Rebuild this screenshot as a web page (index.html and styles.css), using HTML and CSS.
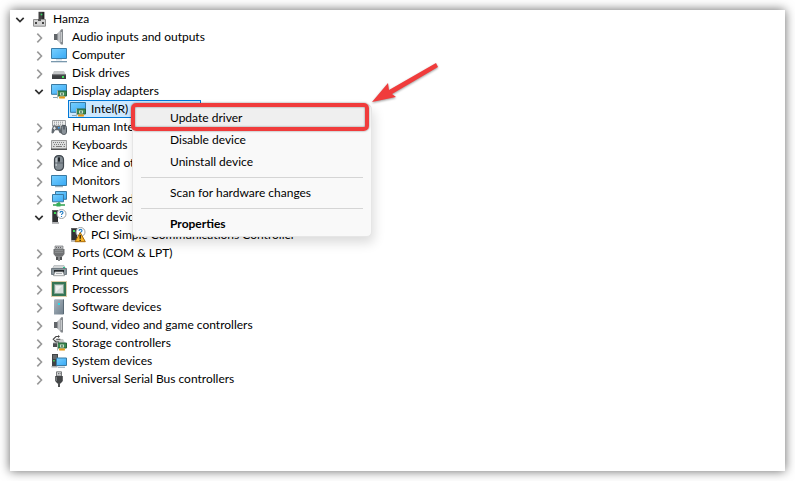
FILE: index.html
```html
<!DOCTYPE html>
<html lang="en">
  <head>
    <meta charset="UTF-8" />
    <meta name="viewport" content="width=device-width, initial-scale=1.0" />
    <title>Device Manager</title>
    <link rel="stylesheet" href="styles.css">
  </head>
  <body>
    <!-- icon set -->
    <svg class="sprite" aria-hidden="true">
      <defs>
        <linearGradient id="blue" x1="0" y1="0" x2="1" y2="1">
          <stop offset="0" stop-color="#78d0ff" />
          <stop offset="1" stop-color="#38a9f5" />
        </linearGradient>
        <linearGradient id="metal" x1="0" y1="0" x2="1" y2="0">
          <stop offset="0" stop-color="#777b80" />
          <stop offset="0.5" stop-color="#d4d6d8" />
          <stop offset="1" stop-color="#85898d" />
        </linearGradient>
        <linearGradient id="case" x1="0" y1="0" x2="1" y2="1">
          <stop offset="0" stop-color="#a9b5bf" />
          <stop offset="1" stop-color="#71808c" />
        </linearGradient>
        <symbol id="open" viewBox="0 0 12 12">
          <path d="M2.3 4.8 6 8.5 9.7 4.8" fill="none" stroke="#303030" stroke-width="1.7" />
        </symbol>
        <symbol id="closed" viewBox="0 0 12 12">
          <path d="M4.3 2.6 8.5 7 4.3 11.4" fill="none" stroke="#999" stroke-width="1.6" />
        </symbol>
        <symbol id="root" viewBox="0 0 16 16">
          <path d="M6.5 .8h5.8v8H6.5z" fill="#434343" />
          <path d="M10.4 1h1.8v7.5h-1.8z" fill="#272727" />
          <path d="M8.7 2.7h1.6v1.6H8.7z" fill="#35dc64" />
          <path d="M1.5 8.5h12v6.7h-12z" fill="#d2d2d2" stroke="#909090" />
          <path d="M6 8h3v2H6z" fill="#555" />
          <path d="M3 11h2v2H3zM10 11h2v2h-2z" fill="#444" />
        </symbol>
        <symbol id="speaker" viewBox="0 0 16 16">
          <path d="M3 5h3v6H3z" fill="#62666a" />
          <path d="M6 5 10 .5v15L6 11z" fill="url(#metal)" />
          <path d="M10 .3h2v15.2h-2z" fill="#84888c" />
          <path d="M10.3 3v10" stroke="#d9dbdd" />
        </symbol>
        <symbol id="computer" viewBox="0 0 16 16">
          <path d="M.5 1.5h15v10H.5z" fill="url(#blue)" stroke="#3b7eaa" />
          <path d="M5 12h6v1.5H5z" fill="#d4e0e8" />
          <path d="M0 14h16v1.3H0z" fill="#7998ad" />
        </symbol>
        <symbol id="disk" viewBox="0 0 16 16">
          <path d="M3 6h10l2 4H1z" fill="#c5c7c8" />
          <path d="M1 9.5h14V14H1z" fill="#3c3e40" />
          <path d="M1 9.3h14v.9H1z" fill="#77797b" />
          <path d="M11 11h2v2h-2z" fill="#40df5b" />
        </symbol>
        <symbol id="card" viewBox="0 0 10 8">
          <path d="M.5.5h9v5h-9z" fill="#3b8b52" stroke="#28603a" />
          <path d="M0 0h1v8H0z" fill="#aeb8b0" />
          <path d="M3 2h4v3H3z" fill="#c7ddc5" />
          <path d="M4.2 2.8h1.5v1.4H4.2z" fill="#275b40" />
          <path d="M2 6h6v2H2z" fill="#efa51e" />
          <path d="M4 6v2M6 6v2" stroke="#a76800" stroke-width=".4" />
        </symbol>
        <symbol id="display" viewBox="0 0 16 16">
          <path d="M.5 1.5h15v9.8H.5z" fill="url(#blue)" stroke="#397aa3" />
          <path d="M2 14h5v1H2z" fill="#8ba5b6" />
          <use href="#card" x="6" y="7" width="10" height="9" />
        </symbol>
        <symbol id="human" viewBox="0 0 16 16">
          <path d="M1.5 1.5h13v5.5h-13z" fill="#eceded" stroke="#9b9ea1" />
          <path d="M3 3.2h10M3 5.2h10" stroke="#8b8e91" stroke-dasharray="1 1" />
          <path d="M2 6.7q2-1.2 3 .3h2q1-1.2 2.2 0L10.5 14q-2 1-3.2-2.8H4Q2 16 .5 13.8.3 10 2 6.7z" fill="#626970" />
          <path d="M2 9.2h3M3.5 7.7v3" stroke="#e5e9ec" />
          <path d="M7 8h1.6v1.6H7z" fill="#379cf0" />
          <rect x="10.3" y="6.3" width="5.2" height="9.2" rx="2.4" fill="#8a9299" stroke="#4d555b" />
          <path d="M13 6.5v4" stroke="#28323a" />
        </symbol>
        <symbol id="keyboard" viewBox="0 0 16 16">
          <path d="M.5 3.5h15v9H.5z" fill="#dcdddd" stroke="#9b9b9b" />
          <path d="M2 5.5h12" stroke="#7d7d7d" stroke-dasharray="1 1" />
          <path d="M3 7.5h11" stroke="#7d7d7d" stroke-dasharray="1 1" />
          <path d="M2 9.5h1.5M5 9.5h6M12.5 9.5H14" stroke="#7d7d7d" />
          <path d="M0 11.5h16V13H0z" fill="#555" />
        </symbol>
        <symbol id="mouse" viewBox="0 0 16 16">
          <rect x="3.5" y=".6" width="9" height="14.8" rx="4" fill="#858e95" stroke="#3f474e" stroke-width="1.2" />
          <path d="M5.2 3v8" stroke="#c4cbd0" stroke-width="1.2" />
          <path d="M8 1v7M4 8h8" stroke="#5c656c" />
          <path d="M7 2.5h2v4H7z" fill="#20262b" />
        </symbol>
        <symbol id="monitor" viewBox="0 0 16 16">
          <path d="M.5 2.5h15v10H.5z" fill="url(#blue)" stroke="#397aa3" />
          <path d="M4 13.2h8v1H4z" fill="#839dad" />
        </symbol>
        <symbol id="network" viewBox="0 0 16 16">
          <path d="M4.5.5h11v7.8h-11z" fill="url(#blue)" stroke="#397aa3" />
          <path d="M1.5 3.5h11v7.3h-11z" fill="url(#blue)" stroke="#397aa3" />
          <path d="M7 11h2v2h5v2H2v-2h5z" fill="#61b779" />
          <path d="M5.5 12h4v3.5h-4z" fill="#36ad5b" />
        </symbol>
        <symbol id="other" viewBox="0 0 16 16">
          <path d="M1 1.2h6v12H1z" fill="#303234" />
          <path d="M1 1.2h1v12H1z" fill="#67696b" />
          <path d="M3 3h2v2H3z" fill="#3bd854" />
          <path d="M1 13.2h7v1.6H1z" fill="#a9abad" />
          <circle cx="10.5" cy="5" r="4.5" fill="#fff" stroke="#9b9ea1" />
          <path d="M9 3.9q.1-1.5 1.5-1.5t1.5 1.2q0 .7-.8 1.2-.7.4-.7 1.2M10.5 7v1" fill="none" stroke="#247dc5" stroke-width="1.1" />
        </symbol>
        <symbol id="warning" viewBox="0 0 16 16">
          <use href="#other" width="16" height="16" />
          <path d="M10.2 5.5 15.3 14.7H5.1z" fill="#f8b528" stroke="#a86808" stroke-linejoin="round" />
          <path d="M10.2 8v3.7M10.2 12.7v1.2" stroke="#2c2413" stroke-width="1.4" />
        </symbol>
        <symbol id="port" viewBox="0 0 16 16">
          <path d="M4 1h8v3H4z" fill="#bfc1c3" stroke="#77797b" stroke-width=".7" />
          <path d="M5 2.5h6" stroke="#666" stroke-dasharray="1 1" />
          <path d="M2.5 4h11v5l-2 2.5h-7l-2-2.5z" fill="#707274" />
          <path d="M4 5.3h8M4 7.3h8" stroke="#929496" />
          <path d="M5 11.5h2V15H5zM9 11.5h2V15H9z" fill="#505254" />
          <path d="M7 11h2v5H7z" fill="#858789" />
        </symbol>
        <symbol id="printer" viewBox="0 0 16 16">
          <path d="M3 2.5h10l1.5 3h-13z" fill="#d2d5d6" stroke="#a6abae" stroke-width=".6" />
          <path d="M.5 5.5h15v6H.5z" fill="#8a959b" stroke="#707b82" />
          <path d="M3 7h10v2.5H3z" fill="#25292c" />
          <path d="M4 8.7h8l1.5 4h-11z" fill="#f7f7f7" stroke="#646b6f" stroke-width=".6" />
          <path d="M12 4h2v1h-2z" fill="#20c98c" />
          <path d="M5 10.5h6" stroke="#acb1b4" />
        </symbol>
        <symbol id="chip" viewBox="0 0 16 16">
          <rect x=".5" y=".5" width="15" height="15" fill="none" stroke="#b99b50" stroke-dasharray="1 1" />
          <path d="M1 1h14v14H1z" fill="#357554" />
          <path d="M3.5 3.5h9v9h-9z" fill="#d6ddda" stroke="#85a494" />
          <path d="M5 5h6L5 11z" fill="#eff2f1" />
        </symbol>
        <symbol id="software" viewBox="0 0 16 16">
          <path d="M4 0h9v15H3V1z" fill="#bac4cb" />
          <path d="M3 1h9v14.5H3z" fill="url(#case)" />
          <path d="M12 1 13 0v15l-1 .5z" fill="#596975" />
          <path d="M7 4h2v2H7z" fill="#28dbed" />
        </symbol>
        <symbol id="storage" viewBox="0 0 16 16">
          <path d="M5 4h7l2 4H2z" fill="#c8caca" />
          <path d="M2 8.2h9V12H2z" fill="#4a4d4f" />
          <path d="M7.7 1.5H5L2.2 4.3 5 7h3M5.3 4.3h4" fill="none" stroke="#444" stroke-width="1.1" />
          <path d="m7 0 2 1.5-2 1.6z" fill="#444" />
          <use href="#card" x="6" y="7" width="10" height="9" />
        </symbol>
        <symbol id="system" viewBox="0 0 16 16">
          <path d="M1 1h6v12H1z" fill="#414446" />
          <path d="M2 3h4M2 5h4" stroke="#8a8d8f" />
          <path d="M2.2 7h1.5v1.5H2.2z" fill="#42db5c" />
          <path d="M.5 13h6v1.5h-6z" fill="#a9abad" />
          <path d="M5.5 5h10v7.5h-10z" fill="url(#blue)" stroke="#397aa3" />
          <path d="M7 13.7h7v1H7z" fill="#839dad" />
        </symbol>
        <symbol id="usb" viewBox="0 0 16 16">
          <path d="M5.5.8h5V5h-5z" fill="#d6d8d9" stroke="#77797b" />
          <path d="M7 2h.8v1.2H7zM8.7 2h.8v1.2h-.8z" fill="#505254" />
          <path d="M4.2 5h7.6v5L9.6 12.5H6.4L4.2 10z" fill="#434547" />
          <path d="M5.5 6v4" stroke="#777a7c" />
          <path d="M7 12h2v4H7z" fill="#505254" />
        </symbol>
      </defs>
    </svg>

    <main class="window">
      <ul class="tree">
        <li>
          <div class="row"><button type="button" class="toggle" aria-label="Collapse Hamza"><svg><use href="#open" /></svg></button><span class="device"><svg class="icon"><use href="#root" /></svg>Hamza</span></div>
          <ul>
            <li><div class="row"><button type="button" class="toggle" aria-label="Expand Audio inputs and outputs"><svg><use href="#closed" /></svg></button><span class="device"><svg class="icon"><use href="#speaker" /></svg>Audio inputs and outputs</span></div></li>
            <li><div class="row"><button type="button" class="toggle" aria-label="Expand Computer"><svg><use href="#closed" /></svg></button><span class="device"><svg class="icon"><use href="#computer" /></svg>Computer</span></div></li>
            <li><div class="row"><button type="button" class="toggle" aria-label="Expand Disk drives"><svg><use href="#closed" /></svg></button><span class="device"><svg class="icon"><use href="#disk" /></svg>Disk drives</span></div></li>
            <li>
              <div class="row"><button type="button" class="toggle" aria-label="Collapse Display adapters"><svg><use href="#open" /></svg></button><span class="device"><svg class="icon"><use href="#display" /></svg>Display adapters</span></div>
              <ul>
                <li><div class="row leaf"><span class="device selected"><svg class="icon"><use href="#display" /></svg>Intel(R) HD Graphics</span></div></li>
              </ul>
            </li>
            <li><div class="row"><button type="button" class="toggle" aria-label="Expand Human Interface Devices"><svg><use href="#closed" /></svg></button><span class="device"><svg class="icon"><use href="#human" /></svg>Human Interface Devices</span></div></li>
            <li><div class="row"><button type="button" class="toggle" aria-label="Expand Keyboards"><svg><use href="#closed" /></svg></button><span class="device"><svg class="icon"><use href="#keyboard" /></svg>Keyboards</span></div></li>
            <li><div class="row"><button type="button" class="toggle" aria-label="Expand Mice and other pointing devices"><svg><use href="#closed" /></svg></button><span class="device"><svg class="icon"><use href="#mouse" /></svg>Mice and other pointing devices</span></div></li>
            <li><div class="row"><button type="button" class="toggle" aria-label="Expand Monitors"><svg><use href="#closed" /></svg></button><span class="device"><svg class="icon"><use href="#monitor" /></svg>Monitors</span></div></li>
            <li><div class="row"><button type="button" class="toggle" aria-label="Expand Network adapters"><svg><use href="#closed" /></svg></button><span class="device"><svg class="icon"><use href="#network" /></svg>Network adapters</span></div></li>
            <li>
              <div class="row"><button type="button" class="toggle" aria-label="Collapse Other devices"><svg><use href="#open" /></svg></button><span class="device"><svg class="icon"><use href="#other" /></svg>Other devices</span></div>
              <ul>
                <li><div class="row leaf"><span class="device"><svg class="icon"><use href="#warning" /></svg>PCI Simple Communications Controller</span></div></li>
              </ul>
            </li>
            <li><div class="row"><button type="button" class="toggle" aria-label="Expand Ports"><svg><use href="#closed" /></svg></button><span class="device"><svg class="icon"><use href="#port" /></svg>Ports (COM &amp; LPT)</span></div></li>
            <li><div class="row"><button type="button" class="toggle" aria-label="Expand Print queues"><svg><use href="#closed" /></svg></button><span class="device"><svg class="icon"><use href="#printer" /></svg>Print queues</span></div></li>
            <li><div class="row"><button type="button" class="toggle" aria-label="Expand Processors"><svg><use href="#closed" /></svg></button><span class="device"><svg class="icon"><use href="#chip" /></svg>Processors</span></div></li>
            <li><div class="row"><button type="button" class="toggle" aria-label="Expand Software devices"><svg><use href="#closed" /></svg></button><span class="device"><svg class="icon"><use href="#software" /></svg>Software devices</span></div></li>
            <li><div class="row"><button type="button" class="toggle" aria-label="Expand Sound, video and game controllers"><svg><use href="#closed" /></svg></button><span class="device"><svg class="icon"><use href="#speaker" /></svg>Sound, video and game controllers</span></div></li>
            <li><div class="row"><button type="button" class="toggle" aria-label="Expand Storage controllers"><svg><use href="#closed" /></svg></button><span class="device"><svg class="icon"><use href="#storage" /></svg>Storage controllers</span></div></li>
            <li><div class="row"><button type="button" class="toggle" aria-label="Expand System devices"><svg><use href="#closed" /></svg></button><span class="device"><svg class="icon"><use href="#system" /></svg>System devices</span></div></li>
            <li><div class="row"><button type="button" class="toggle" aria-label="Expand Universal Serial Bus controllers"><svg><use href="#closed" /></svg></button><span class="device"><svg class="icon"><use href="#usb" /></svg>Universal Serial Bus controllers</span></div></li>
          </ul>
        </li>
      </ul>

      <div class="menu" role="menu">
        <button type="button" role="menuitem" class="active">Update driver</button>
        <button type="button" role="menuitem">Disable device</button>
        <button type="button" role="menuitem">Uninstall device</button>
        <hr />
        <button type="button" role="menuitem">Scan for hardware changes</button>
        <hr />
        <button type="button" role="menuitem" class="default">Properties</button>
        <div class="highlight"></div>
      </div>

      <svg class="arrow" viewBox="0 0 70 44" aria-hidden="true">
        <path d="M2 40 18 21 19 28 66 1 68 5 22 32 26 35z" />
      </svg>
    </main>
  </body>
</html>
```

FILE: styles.css
```css
:root {
  --text-color: #000;
  --menu-color: #f9f9f9;
  --mark-color: #f03c3c;
}

* {
  box-sizing: border-box;
}

body {
  margin: 0;
  min-height: 100vh;
  padding: 10px;
  display: flex;
  background-color: #fff;
  color: var(--text-color);
  font-family: Lato, "Open Sans", sans-serif;
  font-size: 12px;
  line-height: 16px;
}

button {
  border: none;
  background: none;
  padding: 0;
  color: inherit;
  font: inherit;
}

.sprite {
  position: absolute;
  width: 0;
  height: 0;
}

.window {
  position: relative;
  flex: 1;
  background-color: #fff;
  box-shadow: 0 0 10px rgba(0, 0, 0, 0.6);
}

/* Device tree */
.tree,
.tree ul {
  list-style: none;
  margin: 0;
  padding: 0;
}

.tree {
  padding-left: 4px;
}

.tree ul {
  padding-left: 19px;
}

.row {
  display: flex;
  align-items: center;
  height: 18px;
}

.leaf {
  padding-left: 16px;
}

.toggle {
  width: 12px;
  height: 12px;
  margin-right: 4px;
}

.toggle svg {
  display: block;
  width: 12px;
  height: 12px;
}

.device {
  display: flex;
  align-items: center;
  gap: 5px;
  height: 18px;
  padding: 0 1px;
  border: 1px solid transparent;
  white-space: nowrap;
}

.selected {
  background-color: #cce8ff;
  border-color: #0078d7;
}

.icon {
  width: 16px;
  height: 16px;
}

/* Context menu */
.menu {
  position: absolute;
  top: 94px;
  left: 122px;
  width: 240px;
  padding: 2px 2px 1px;
  display: flex;
  flex-direction: column;
  background-color: var(--menu-color);
  border: 1px solid #e6e6e6;
  border-radius: 5px;
  box-shadow: 2px 6px 12px rgba(0, 0, 0, 0.14);
}

.menu button {
  height: 22px;
  padding: 0 35px;
  text-align: left;
}

.menu .active {
  background-color: #efefef;
}

.menu .default {
  font-weight: bold;
}

.menu hr {
  width: 222px;
  margin: 4px auto;
  border: none;
  border-top: 1px solid #d5d5d5;
}

.highlight {
  position: absolute;
  top: -2px;
  left: -2px;
  right: 2px;
  height: 28px;
  border: 4px solid var(--mark-color);
  border-radius: 5px;
  box-shadow: 0 0 2px rgba(0, 0, 0, 0.5), inset 0 0 2px rgba(0, 0, 0, 0.5);
  pointer-events: none;
}

.arrow {
  position: absolute;
  top: 52px;
  left: 360px;
  width: 70px;
  height: 44px;
  fill: var(--mark-color);
  filter: drop-shadow(0 1px 1px rgba(0, 0, 0, 0.4));
}
```
